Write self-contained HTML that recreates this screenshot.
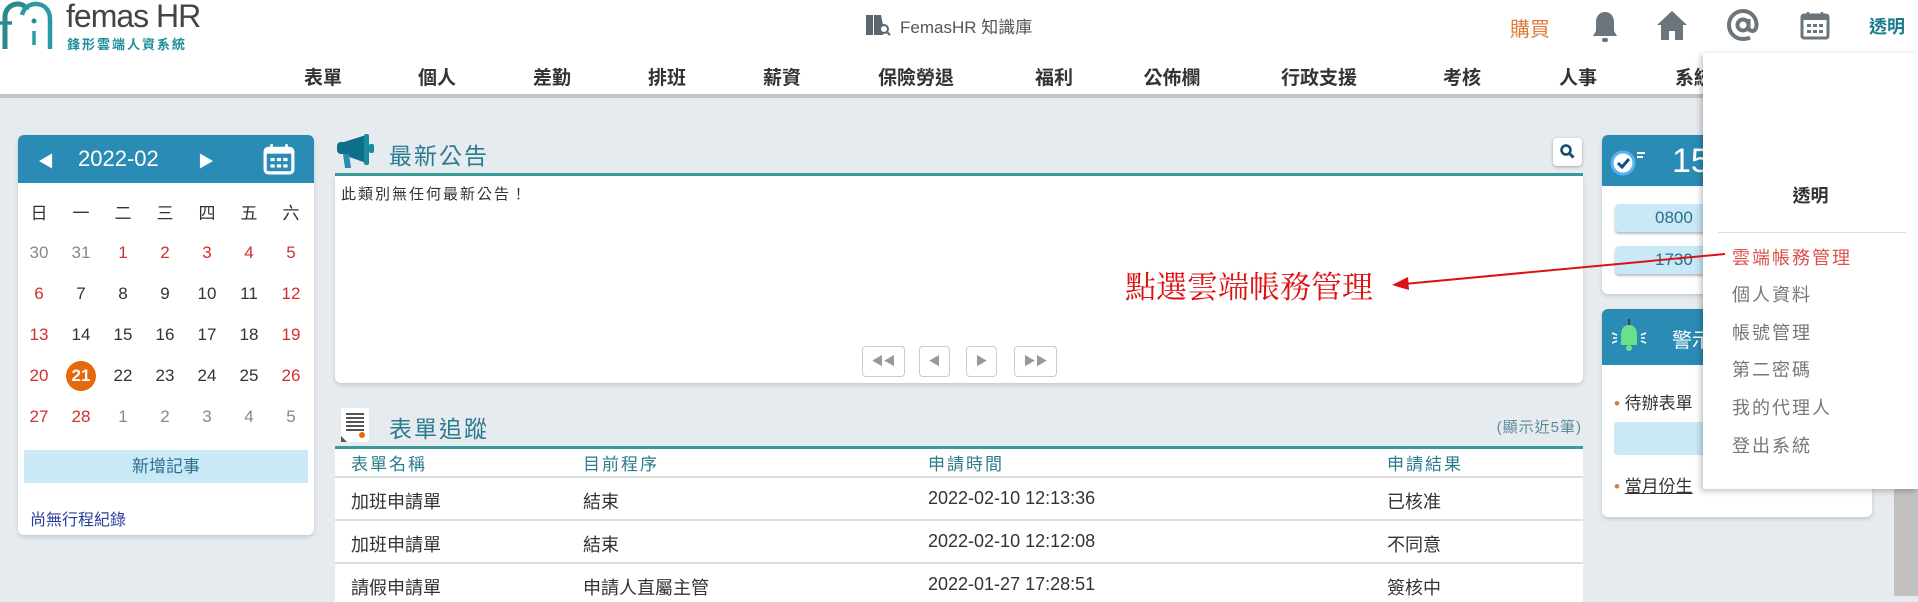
<!DOCTYPE html>
<html><head><meta charset="utf-8"><style>
*{margin:0;padding:0;box-sizing:border-box}
body{width:1918px;height:596px;overflow:hidden;background:#e6ebef;font-family:"Liberation Sans","Noto Sans CJK TC",sans-serif;position:relative;color:#333}
.a{position:absolute;white-space:nowrap}
.hdr{position:absolute;left:0;top:0;width:1918px;height:98px;background:#fff;border-bottom:4px solid #c4c4c4}
.nav{font-size:19px;font-weight:bold;color:#333;top:63px;transform:translateX(-50%)}
.card{position:absolute;background:#fff;border-radius:6px;box-shadow:0 2px 4px rgba(0,0,0,.15)}
.cal td{width:42px;text-align:center;font-size:17px;height:41px;color:#333}
.r{color:#d32f2f!important}.g{color:#888!important}
.row{position:absolute;left:335px;width:1248px;height:43px;border-top:2px solid #ddd;background:#fff;font-size:18px}
.row span{position:absolute;top:10px}
.pg{position:absolute;top:346px;height:31px;border:1px solid #ccc;border-radius:4px;background:#fff;color:#999;font-size:12px;text-align:center;line-height:29px}
.dd{position:absolute;left:1703px;top:53px;width:215px;height:436px;background:#fff;box-shadow:-2px 2px 6px rgba(0,0,0,.25)}
.dd .it{position:absolute;left:29px;font-size:18px;color:#777;letter-spacing:2px}
</style></head><body>
<div class="hdr"></div>
<svg class="a" style="left:0;top:1px" width="58" height="50" viewBox="0 0 58 50"><path d="M5 48V16C5 8 11 3 18 3c5 0 8 3 9 6" stroke="#2a8a8a" stroke-width="5" fill="none"/><path d="M22 14c2-8 8-11 14-11 9 0 14 7 14 15v30" stroke="#2a9aa5" stroke-width="4.5" fill="none"/><circle cx="34" cy="20" r="2.5" fill="#2a8a8a"/><path d="M34 30v14" stroke="#2a9aa5" stroke-width="3.5"/><path d="M0 22h12" stroke="#2a8a8a" stroke-width="3.5"/></svg>
<div class="a" style="left:66px;top:-2px;font-size:32px;color:#444;letter-spacing:-1px">femas HR</div>
<div class="a" style="left:67px;top:34px;font-size:13px;color:#1d8f9a;font-weight:bold;letter-spacing:2px">鋒形雲端人資系統</div>
<svg class="a" style="left:864px;top:12px" width="28" height="26" viewBox="0 0 28 26"><path d="M2 3h7v20H2zM10 3h7l2 10v10h-9z" fill="#5b6770"/><circle cx="20" cy="17" r="4" stroke="#5b6770" stroke-width="2" fill="#fff"/><path d="M23 20l3 3" stroke="#5b6770" stroke-width="2"/></svg>
<div class="a" style="left:900px;top:13px;font-size:17px;color:#555">FemasHR 知識庫</div>
<div class="a" style="left:1510px;top:13px;font-size:20px;color:#e07b39">購買</div>
<svg class="a" style="left:1591px;top:10px" width="28" height="34" viewBox="0 0 28 34"><path d="M14 2c-6 0-9 5-9 10v9l-3 5h24l-3-5v-9c0-5-3-10-9-10z" fill="#6b757c"/><rect x="11" y="28" width="6" height="4" rx="2" fill="#6b757c"/></svg>
<svg class="a" style="left:1656px;top:9px" width="32" height="32" viewBox="0 0 32 32"><path d="M16 2L1 16h4v15h8v-9h6v9h8V16h4z" fill="#6b757c"/></svg>
<svg class="a" style="left:1726px;top:8px" width="34" height="34" viewBox="0 0 34 34"><circle cx="17" cy="17" r="5.5" stroke="#6b757c" stroke-width="4" fill="none"/><path d="M22.5 11v8c0 3 2 4 4 4s4-2 4-6c0-8-6-14-13.5-14S3 9 3 17s6 14 14 14c3 0 5-.5 7-1.5" stroke="#6b757c" stroke-width="4" fill="none"/></svg>
<svg class="a" style="left:1800px;top:10px" width="30" height="30" viewBox="0 0 30 30"><rect x="2" y="5" width="26" height="23" rx="2" fill="none" stroke="#6b757c" stroke-width="3"/><rect x="2" y="5" width="26" height="5" fill="#6b757c"/><path d="M8 2v5M22 2v5" stroke="#6b757c" stroke-width="2.5"/><g fill="#6b757c"><rect x="7" y="14" width="4" height="3"/><rect x="13" y="14" width="4" height="3"/><rect x="19" y="14" width="4" height="3"/><rect x="7" y="20" width="4" height="3"/><rect x="13" y="20" width="4" height="3"/><rect x="19" y="20" width="4" height="3"/></g></svg>
<div class="a" style="left:1869px;top:13px;font-size:18px;color:#1d7a8a;font-weight:bold">透明</div>
<div class="a nav" style="left:323px">表單</div><div class="a nav" style="left:437px">個人</div><div class="a nav" style="left:552px">差勤</div><div class="a nav" style="left:667px">排班</div><div class="a nav" style="left:782px">薪資</div><div class="a nav" style="left:916px">保險勞退</div><div class="a nav" style="left:1054px">福利</div><div class="a nav" style="left:1172px">公佈欄</div><div class="a nav" style="left:1319px">行政支援</div><div class="a nav" style="left:1462px">考核</div><div class="a nav" style="left:1578px">人事</div><div class="a nav" style="left:1694px">系統</div>

<div class="card" style="left:18px;top:135px;width:296px;height:400px;overflow:hidden">
<div style="height:48px;background:#2a8bb5;position:relative">
<div class="a" style="left:20px;top:13px;color:#fff;font-size:16px">◀</div>
<div class="a" style="left:60px;top:11px;color:#fff;font-size:22px">2022-02</div>
<div class="a" style="left:180px;top:13px;color:#fff;font-size:16px">▶</div>
<svg class="a" style="left:245px;top:8px" width="32" height="32" viewBox="0 0 30 30"><rect x="2" y="5" width="26" height="23" rx="3" fill="none" stroke="#fff" stroke-width="3"/><rect x="2" y="5" width="26" height="5" fill="#fff"/><path d="M8 1v6M22 1v6" stroke="#fff" stroke-width="2.5"/><g fill="#fff"><rect x="7" y="14" width="4" height="3"/><rect x="13" y="14" width="4" height="3"/><rect x="19" y="14" width="4" height="3"/><rect x="7" y="20" width="4" height="3"/><rect x="13" y="20" width="4" height="3"/><rect x="19" y="20" width="4" height="3"/></g></svg>
</div>
<table class="cal" style="position:absolute;left:0;top:56px;border-collapse:collapse">
<tr><td>日</td><td>一</td><td>二</td><td>三</td><td>四</td><td>五</td><td>六</td></tr>
<tr><td class="g">30</td><td class="g">31</td><td class="r">1</td><td class="r">2</td><td class="r">3</td><td class="r">4</td><td class="r">5</td></tr>
<tr><td class="r">6</td><td>7</td><td>8</td><td>9</td><td>10</td><td>11</td><td class="r">12</td></tr>
<tr><td class="r">13</td><td>14</td><td>15</td><td>16</td><td>17</td><td>18</td><td class="r">19</td></tr>
<tr><td class="r">20</td><td><span style="display:inline-block;width:30px;height:30px;border-radius:50%;background:#e8680c;color:#fff;font-weight:bold;line-height:30px">21</span></td><td>22</td><td>23</td><td>24</td><td>25</td><td class="r">26</td></tr>
<tr><td class="r">27</td><td class="r">28</td><td class="g">1</td><td class="g">2</td><td class="g">3</td><td class="g">4</td><td class="g">5</td></tr>
</table>
<div class="a" style="left:6px;top:315px;width:284px;height:33px;background:#c9e9f7;text-align:center;line-height:33px;font-size:17px;color:#2a6f8f">新增記事</div>
<div class="a" style="left:12px;top:371px;font-size:16px;color:#2a3e9a">尚無行程紀錄</div>
</div>

<svg class="a" style="left:336px;top:133px" width="40" height="36" viewBox="0 0 40 36"><rect x="1" y="9" width="10" height="12" rx="4" fill="#0e6f8a"/><path d="M8 9l22-7v28L8 22z" fill="#0e6f8a"/><rect x="28" y="1" width="5" height="31" rx="2" fill="#1a8aa0"/><path d="M7 21h6l2 14H9z" fill="#2a8bb5"/><rect x="33" y="11" width="5" height="9" rx="2" fill="#1a8aa0"/></svg>
<div class="a" style="left:389px;top:137px;font-size:23px;color:#2a7b8f;letter-spacing:2px">最新公告</div>
<div class="a" style="left:1553px;top:138px;width:29px;height:28px;background:#fff;border-radius:4px;box-shadow:0 1px 3px rgba(0,0,0,.3)"><svg style="position:absolute;left:7px;top:6px" width="15" height="15" viewBox="0 0 15 15"><circle cx="6" cy="6" r="4.5" stroke="#0e4f6a" stroke-width="2.5" fill="none"/><path d="M9.5 9.5l4 4" stroke="#0e4f6a" stroke-width="3"/></svg></div>
<div class="a" style="left:335px;top:173px;width:1248px;height:3px;background:#3a9a9a"></div>
<div class="card" style="left:335px;top:176px;width:1248px;height:207px;border-radius:0 0 6px 6px">
<div class="a" style="left:6px;top:7px;font-size:15px;color:#333;letter-spacing:2px">此類別無任何最新公告！</div></div>
<div class="pg" style="left:862px;width:43px">◀◀</div><div class="pg" style="left:919px;width:31px">◀</div><div class="pg" style="left:966px;width:31px">▶</div><div class="pg" style="left:1014px;width:43px">▶▶</div>

<svg class="a" style="left:340px;top:407px" width="32" height="36" viewBox="0 0 32 36"><rect x="1" y="1" width="28" height="34" rx="2" fill="#fff"/><path d="M6 7h18M6 11h18M6 15h18M6 19h18M6 23h18" stroke="#555" stroke-width="2"/><circle cx="22" cy="28" r="3" fill="#e8680c"/><path d="M1 29l6 6H1z" fill="#555"/></svg>
<div class="a" style="left:389px;top:410px;font-size:23px;color:#2a7b8f;letter-spacing:2px">表單追蹤</div>
<div class="a" style="right:336px;top:416px;font-size:15px;color:#5a8a9a;letter-spacing:1px">(顯示近5筆)</div>
<div class="a" style="left:335px;top:446px;width:1248px;height:3px;background:#3a9a9a"></div>
<div class="a" style="left:335px;top:449px;width:1248px;height:27px;background:#fff;font-size:17px;color:#2a7b8f;letter-spacing:2px"><span class="a" style="left:16px;top:1px">表單名稱</span><span class="a" style="left:248px;top:1px">目前程序</span><span class="a" style="left:593px;top:1px">申請時間</span><span class="a" style="left:1052px;top:1px">申請結果</span></div>
<div class="row" style="top:476px"><span style="left:16px">加班申請單</span><span style="left:248px">結束</span><span style="left:593px">2022-02-10 12:13:36</span><span style="left:1052px">已核准</span></div>
<div class="row" style="top:519px"><span style="left:16px">加班申請單</span><span style="left:248px">結束</span><span style="left:593px">2022-02-10 12:12:08</span><span style="left:1052px">不同意</span></div>
<div class="row" style="top:562px;height:40px"><span style="left:16px">請假申請單</span><span style="left:248px">申請人直屬主管</span><span style="left:593px">2022-01-27 17:28:51</span><span style="left:1052px">簽核中</span></div>

<div class="card" style="left:1602px;top:135px;width:270px;height:159px;overflow:hidden">
<div style="height:51px;background:#2a8bb5"></div>
<svg class="a" style="left:7px;top:12px" width="40" height="30" viewBox="0 0 40 30"><circle cx="14" cy="16" r="11" fill="#fff" stroke="#5ab0f0" stroke-width="3"/><path d="M9 16l4 4 7-8" stroke="#0e4f8a" stroke-width="3" fill="none"/><path d="M28 6h8M28 10h6" stroke="#fff" stroke-width="2"/></svg>
<div class="a" style="left:70px;top:7px;font-size:34px;color:#fff">15</div>
<div class="a" style="left:13px;top:69px;width:260px;height:28px;background:#c9e9f7;border-radius:4px;box-shadow:0 2px 2px #bbb;font-size:17px;color:#2a6f8f;line-height:28px;padding-left:40px">0800</div>
<div class="a" style="left:13px;top:111px;width:260px;height:28px;background:#c9e9f7;border-radius:4px;box-shadow:0 2px 2px #bbb;font-size:17px;color:#2a6f8f;line-height:28px;padding-left:40px">1730</div>
</div>
<div class="card" style="left:1602px;top:309px;width:270px;height:208px;overflow:hidden">
<div style="height:56px;background:#2a8bb5"></div>
<svg class="a" style="left:7px;top:8px" width="40" height="40" viewBox="0 0 40 40"><path d="M20 2v6" stroke="#333" stroke-width="1.5"/><path d="M20 8c-6 0-8 5-8 10v10h16V18c0-5-2-10-8-10z" fill="#6be08a"/><circle cx="20" cy="31" r="3" fill="#6be08a"/><path d="M3 16l5 2M3 26l5-2M37 16l-5 2M37 26l-5-2M4 21h4M32 21h4" stroke="#fff" stroke-width="1.5"/></svg>
<div class="a" style="left:70px;top:15px;font-size:20px;color:#fff">警示</div>
<div class="a" style="left:12px;top:80px;font-size:17px;color:#333"><span style="color:#e07b39">•</span> 待辦表單</div>
<div class="a" style="left:12px;top:113px;width:250px;height:33px;background:#c9e9f7;border-radius:3px"></div>
<div class="a" style="left:12px;top:163px;font-size:17px;color:#333"><span style="color:#e07b39">•</span> <u>當月份生</u></div>
</div>
<div class="a" style="left:1894px;top:102px;width:24px;height:494px;background:#c1c1c1"></div>

<div class="dd">
<div class="a" style="left:0;width:215px;text-align:center;top:129px;font-size:18px;font-weight:bold;color:#333">透明</div>
<div class="a" style="left:15px;top:179px;width:188px;height:1px;background:#ddd"></div>
<div class="it" style="top:191px;color:#d9534f">雲端帳務管理</div>
<div class="it" style="top:228px">個人資料</div>
<div class="it" style="top:266px">帳號管理</div>
<div class="it" style="top:303px">第二密碼</div>
<div class="it" style="top:341px">我的代理人</div>
<div class="it" style="top:379px">登出系統</div>
</div>

<div class="a" style="left:1125px;top:262px;font-size:31px;color:#d11;font-family:'Liberation Serif','Noto Serif CJK SC',serif">點選雲端帳務管理</div>
<svg class="a" style="left:1390px;top:246px" width="340" height="45" viewBox="0 0 340 45"><path d="M335 8L14 38" stroke="#d11" stroke-width="2"/><path d="M2 39l16-8 1 13z" fill="#d11"/></svg>
</body></html>
